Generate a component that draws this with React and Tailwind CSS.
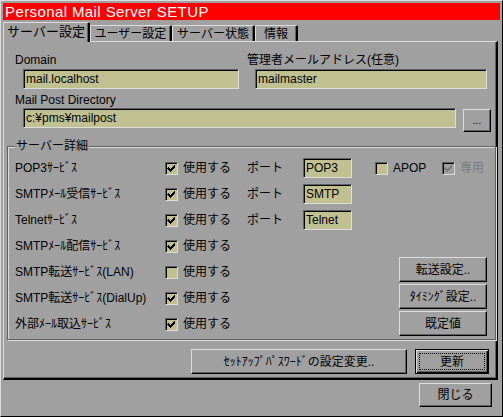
import React from "react";

const sunken =
  "border border-t-[#606060] border-l-[#606060] border-r-[#dcdcdc] border-b-[#dcdcdc] shadow-[inset_1px_1px_0_#000]";
const raised =
  "border border-t-[#dcdcdc] border-l-[#dcdcdc] border-r-black border-b-black shadow-[inset_-1px_-1px_0_#606060]";

function Field({ value, className = "" }) {
  return (
    <div className={`${sunken} bg-[#c0c090] flex items-center pl-[2px] h-[20px] leading-none ${className}`}>
      {value}
    </div>
  );
}

function Button({ children, className = "" }) {
  return (
    <div className={`${raised} bg-[#a0a0a0] flex items-center justify-center leading-none ${className}`}>
      {children}
    </div>
  );
}

function Check({ checked, disabled }) {
  return (
    <div
      className={`${sunken} w-[13px] h-[13px] shrink-0 flex items-center justify-center ${
        disabled ? "bg-[#a0a0a0]" : "bg-[#c0c090]"
      }`}
    >
      {checked && (
        <svg width="9" height="9" viewBox="0 0 9 9" shapeRendering="crispEdges">
          <path
            d="M1 3h1v1h1v1h1v-1h1v-1h1v-1h1v-1h1v3h-1v1h-1v1h-1v1h-1v1h-1v-1h-1v-1h-1v-1h-1z"
            fill={disabled ? "#7c7c7c" : "#000"}
          />
        </svg>
      )}
    </div>
  );
}

const services = [
  { name: "POP3ｻｰﾋﾞｽ", on: true, port: "POP3", apop: true },
  { name: "SMTPﾒｰﾙ受信ｻｰﾋﾞｽ", on: true, port: "SMTP" },
  { name: "Telnetｻｰﾋﾞｽ", on: true, port: "Telnet" },
  { name: "SMTPﾒｰﾙ配信ｻｰﾋﾞｽ", on: true },
];

const moreServices = [
  { name: "SMTP転送ｻｰﾋﾞｽ(LAN)", on: false },
  { name: "SMTP転送ｻｰﾋﾞｽ(DialUp)", on: true },
  { name: "外部ﾒｰﾙ取込ｻｰﾋﾞｽ", on: true },
];

function ServiceRow({ s }) {
  return (
    <div className="flex items-center h-[26px]">
      <div className="w-[150px] whitespace-nowrap">{s.name}</div>
      <div className="w-[82px] flex items-center">
        <Check checked={s.on} />
        <span className="ml-[5px]">使用する</span>
      </div>
      {s.port && (
        <>
          <div className="w-[56px]">ポート</div>
          <Field value={s.port} className="w-[49px]" />
        </>
      )}
      {s.apop && (
        <>
          <div className="ml-[23px] w-[67px] flex items-center">
            <Check checked={false} />
            <span className="ml-[5px]">APOP</span>
          </div>
          <div className="flex items-center">
            <Check checked disabled />
            <span className="ml-[5px] text-[#7c7c7c]">専用</span>
          </div>
        </>
      )}
    </div>
  );
}

const tabs = [
  { label: "サーバー設定", w: "w-[87px]", active: true },
  { label: "ユーザー設定", w: "w-[82px]" },
  { label: "サーバー状態", w: "w-[83px]" },
  { label: "情報", w: "w-[43px]" },
];

export default function App() {
  return (
    <div className="w-[503px] h-[417px] bg-[#a0a0a0] border border-t-[#dcdcdc] border-l-[#dcdcdc] border-r-black border-b-black p-[2px] flex flex-col text-[12px] text-black font-['Liberation_Sans','Noto_Sans_CJK_JP',sans-serif] overflow-hidden">
      {/* Title bar */}
      <div className="h-[17px] bg-[#ff0000] text-white text-[15px] leading-[17px] pl-[2px] tracking-[0.4px] whitespace-nowrap">
        Personal Mail Server SETUP
      </div>

      {/* Tabs */}
      <div className="mt-[2px] h-[19px] flex items-end">
        {tabs.map((t) => (
          <div
            key={t.label}
            className={`${t.w} flex items-center justify-center whitespace-nowrap bg-[#a0a0a0] border-t border-l border-t-[#dcdcdc] border-l-[#dcdcdc] border-r-2 border-r-black shadow-[inset_-1px_0_0_#606060] rounded-t-[2px] ${
              t.active ? "h-[20px] -mb-[1px] pb-[2px] relative z-10 text-[13px]" : "h-[16px] text-[12px]"
            }`}
          >
            {t.label}
          </div>
        ))}
      </div>

      {/* Panel */}
      <div className="h-[339px] mr-[2px] border-t border-l border-t-[#dcdcdc] border-l-[#dcdcdc] border-r-2 border-b-2 border-r-black border-b-black shadow-[inset_-1px_-1px_0_#606060] flex flex-col">
        <div className="pl-[11px] pt-[11px]">
          <div className="flex gap-[8px]">
            <div className="w-[224px]">
              <div className="h-[14px] leading-[14px]">Domain</div>
              <Field value="mail.localhost" className="mt-[2px] ml-[8px] w-[216px]" />
            </div>
            <div>
              <div className="h-[14px] leading-[14px]">管理者メールアドレス(任意)</div>
              <Field value="mailmaster" className="mt-[2px] ml-[8px] w-[232px]" />
            </div>
          </div>
          <div className="mt-[4px] h-[14px] leading-[14px]">Mail Post Directory</div>
          <div className="mt-[1px] flex items-start">
            <Field value="c:¥pms¥mailpost" className="ml-[8px] w-[433px]" />
            <Button className="ml-[7px] mt-[1px] w-[28px] h-[23px] items-end pb-[5px] text-[10px]">...</Button>
          </div>
        </div>

        <fieldset className="mt-[7px] ml-[3px] p-0 border border-[#606060] shadow-[inset_1px_1px_0_#dcdcdc,1px_1px_0_#dcdcdc]">
          <legend className="ml-[7px] px-[1px] bg-[#a0a0a0] h-[14px] leading-[14px]">サーバー詳細</legend>
          <div className="pl-[7px] pt-[2px] pb-[2px]">
            {services.map((s) => (
              <ServiceRow key={s.name} s={s} />
            ))}
            <div className="flex items-start">
              <div className="flex-1">
                {moreServices.map((s) => (
                  <ServiceRow key={s.name} s={s} />
                ))}
              </div>
              <div className="-mt-[2px] mr-[8px] flex flex-col gap-[2px]">
                <Button className="w-[88px] h-[25px]">転送設定..</Button>
                <Button className="w-[88px] h-[25px]">ﾀｲﾐﾝｸﾞ設定..</Button>
                <Button className="w-[88px] h-[25px]">既定値</Button>
              </div>
            </div>
          </div>
        </fieldset>

        <div className="mt-[9px] pr-[7px] flex justify-end gap-[8px]">
          <Button className="w-[216px] h-[25px]">ｾｯﾄｱｯﾌﾟﾊﾟｽﾜｰﾄﾞの設定変更..</Button>
          <div className="w-[74px] h-[25px] border border-black bg-[#a0a0a0] shadow-[inset_1px_1px_0_#dcdcdc,inset_-1px_-1px_0_#000,inset_-2px_-2px_0_#606060] p-[3px] flex">
            <div className="flex-1 border border-dotted border-black flex items-center justify-center leading-none">
              更新
            </div>
          </div>
        </div>
      </div>

      {/* Bottom */}
      <div className="mt-[3px] mr-[8px] flex justify-end">
        <Button className="w-[73px] h-[24px]">閉じる</Button>
      </div>
    </div>
  );
}
